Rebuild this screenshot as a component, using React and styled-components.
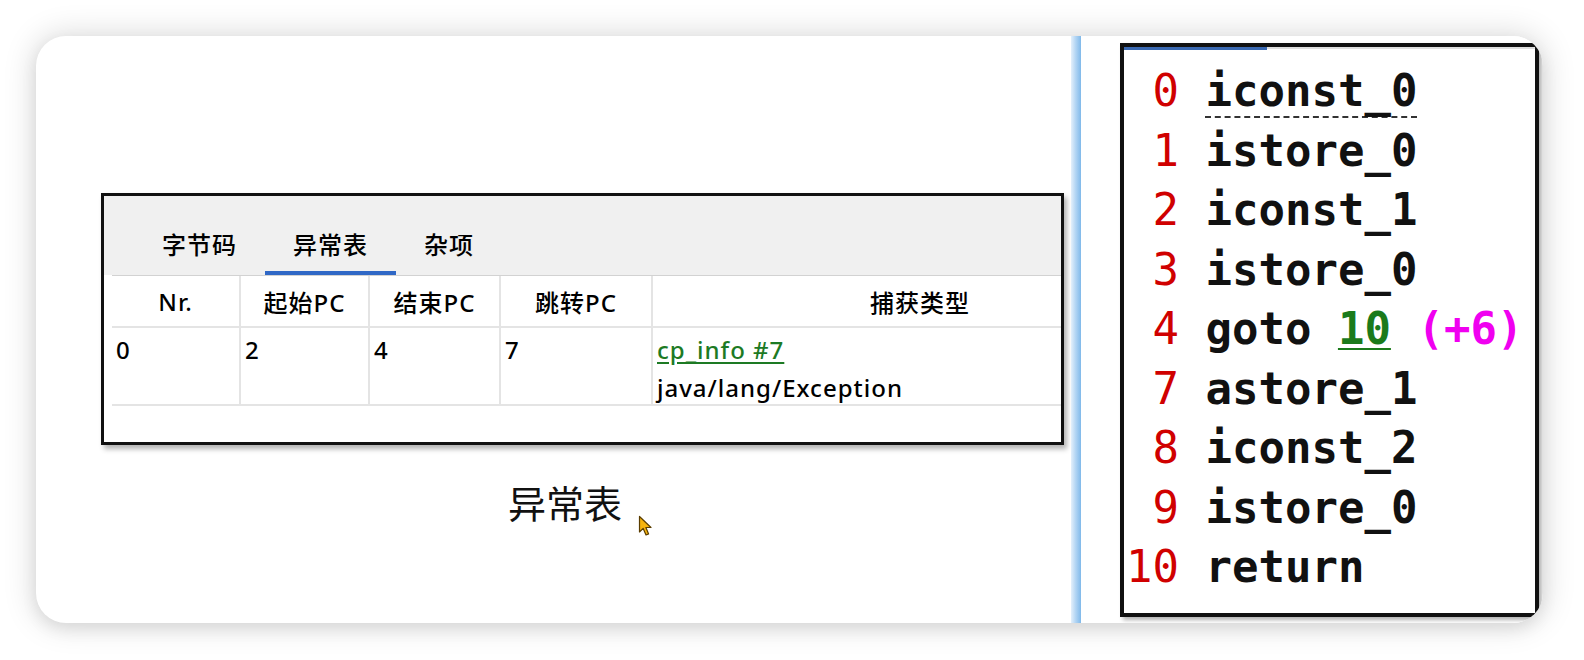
import React from 'react';
import styled, { createGlobalStyle } from 'styled-components';

const tabs = ['字节码', '异常表', '杂项'];
const columns = ['Nr.', '起始PC', '结束PC', '跳转PC', '捕获类型'];

const code = [
  { pc: '0', op: 'iconst_0', marked: true },
  { pc: '1', op: 'istore_0' },
  { pc: '2', op: 'iconst_1' },
  { pc: '3', op: 'istore_0' },
  { pc: '4', op: 'goto ', target: '10', offset: ' (+6)' },
  { pc: '7', op: 'astore_1' },
  { pc: '8', op: 'iconst_2' },
  { pc: '9', op: 'istore_0' },
  { pc: '10', op: 'return' },
];

const App = () => {
  return (
    <Page>
      <GlobalStyle />
      <Card>
        <LeftPane>
          <TablePanel>
            <TabBar>
              {tabs.map((t, i) => (
                <Tab key={t} active={i === 1}>{t}</Tab>
              ))}
            </TabBar>
            <TableBody>
              <Grid>
                {columns.map((c) => (
                  <HeadCell key={c}>{c}</HeadCell>
                ))}
                <Cell>0</Cell>
                <Cell>2</Cell>
                <Cell>4</Cell>
                <Cell>7</Cell>
                <Cell>
                  <Link>cp_info #7</Link>
                  <div>java/lang/Exception</div>
                </Cell>
              </Grid>
            </TableBody>
          </TablePanel>
          <CaptionRow>
            <Caption>异常表</Caption>
            <Cursor viewBox="0 0 15 22">
              <path
                d="M1.5 1.5 L1.5 17 L5.2 13.4 L8 20 L10.6 18.9 L7.9 12.5 L13 12.5 Z"
                fill="#f6b40e"
                stroke="#5a3d00"
                strokeWidth="1.2"
                strokeLinejoin="round"
              />
            </Cursor>
          </CaptionRow>
        </LeftPane>
        <Divider />
        <RightPane>
          <CodeBox>
            <TopRule>
              <RuleActive />
              <RuleRest />
            </TopRule>
            <CodeList>
              {code.map((line) => (
                <CodeLine key={line.pc}>
                  <Pc>{line.pc}</Pc>{' '}
                  <Op marked={line.marked}>{line.op}</Op>
                  {line.target && <Target>{line.target}</Target>}
                  {line.offset && <Offset>{line.offset}</Offset>}
                </CodeLine>
              ))}
            </CodeList>
          </CodeBox>
        </RightPane>
      </Card>
    </Page>
  );
};

const GlobalStyle = createGlobalStyle`
  html, body {
    margin: 0;
    padding: 0;
    background: #ffffff;
  }
  body {
    width: 1584px;
    height: 660px;
    overflow: hidden;
    font-family: "Noto Sans", "Noto Sans CJK SC", sans-serif;
    color: #111;
  }
`;

const Page = styled.div`
  box-sizing: border-box;
  height: 660px;
  padding: 36px 0 0 36px;
`;

const Card = styled.div`
  width: 1507px;
  height: 587px;
  display: flex;
  background: #fff;
  border-radius: 30px;
  overflow: hidden;
  box-shadow: 0 0 30px 4px rgba(0, 0, 0, 0.13), 0 6px 16px rgba(0, 0, 0, 0.08);
`;

const LeftPane = styled.div`
  flex: none;
  width: 1035px;
  box-sizing: border-box;
  padding: 157px 0 0 65px;
  display: flex;
  flex-direction: column;
`;

const TablePanel = styled.div`
  width: 963px;
  height: 252px;
  box-sizing: border-box;
  border: 3px solid #111;
  background: #fff;
  box-shadow: 3px 4px 5px rgba(0, 0, 0, 0.3);
  overflow: hidden;
  display: flex;
  flex-direction: column;
`;

const TabBar = styled.div`
  flex: none;
  height: 79px;
  display: flex;
  align-items: flex-end;
  padding-left: 30px;
  background: #f0f0f0;
`;

const Tab = styled.div`
  box-sizing: border-box;
  height: 60px;
  padding: 0 28px;
  display: flex;
  align-items: center;
  font-size: 24px;
  font-weight: 500;
  letter-spacing: 1px;
  color: #000;
  border-bottom: 4px solid ${(p) => (p.active ? '#3068c6' : 'transparent')};
`;

const TableBody = styled.div`
  flex: 1;
  padding-left: 8px;
  background: #fff;
`;

const Grid = styled.div`
  display: grid;
  grid-template-columns: 129px 129px 131px 152px 536px;
  grid-template-rows: 52px 78px;
  border-top: 1px solid #d2d2d2;
  font-size: 24px;
  font-weight: 500;
  letter-spacing: 1px;
  color: #000;
`;

const HeadCell = styled.div`
  display: flex;
  align-items: center;
  justify-content: center;
  border-right: 2px solid #e4e4e4;
  border-bottom: 2px solid #e4e4e4;
`;

const Cell = styled.div`
  box-sizing: border-box;
  padding: 3px 4px 0;
  line-height: 38px;
  overflow: hidden;
  white-space: nowrap;
  border-right: 2px solid #e4e4e4;
  border-bottom: 2px solid #e4e4e4;
`;

const Link = styled.div`
  color: #1d7a24;
  text-decoration: underline;
  text-underline-offset: 3px;
`;

const CaptionRow = styled.div`
  display: flex;
  align-items: flex-start;
  margin-top: 38px;
  padding-left: 407px;
`;

const Caption = styled.div`
  font-family: "Noto Sans CJK SC", sans-serif;
  font-size: 38px;
  line-height: 38px;
  color: #111;
`;

const Cursor = styled.svg`
  width: 15px;
  height: 22px;
  margin: 32px 0 0 16px;
`;

const Divider = styled.div`
  flex: none;
  width: 10px;
  background: linear-gradient(90deg, #e4f0fb 0%, #b4d6f4 45%, #80b9ea 100%);
`;

const RightPane = styled.div`
  flex: 1;
  box-sizing: border-box;
  padding: 7px 0 0 39px;
  background: #fff;
`;

const CodeBox = styled.div`
  width: 419px;
  height: 574px;
  box-sizing: border-box;
  border: 4px solid #111;
  background: #fff;
  box-shadow: 3px 3px 4px rgba(0, 0, 0, 0.3);
`;

const TopRule = styled.div`
  display: flex;
  align-items: flex-start;
  height: 3px;
`;

const RuleActive = styled.div`
  width: 143px;
  height: 3px;
  background: #3a69b2;
`;

const RuleRest = styled.div`
  flex: 1;
  height: 2px;
  background: #dedede;
`;

const CodeList = styled.div`
  padding: 11px 0 0 2px;
  font-family: "DejaVu Sans Mono", "Liberation Mono", monospace;
  font-size: 44px;
  line-height: 59.5px;
  font-weight: bold;
  color: #111;
  white-space: pre;
`;

const CodeLine = styled.div``;

const Pc = styled.span`
  display: inline-block;
  width: 2ch;
  text-align: right;
  font-weight: normal;
  color: #d00000;
`;

const Op = styled.span`
  border-bottom: ${(p) => (p.marked ? '2px dashed #333' : 'none')};
`;

const Target = styled.span`
  color: #1b7a1b;
  text-decoration: underline;
  text-decoration-thickness: 2px;
  text-underline-offset: 4px;
`;

const Offset = styled.span`
  color: #f000f0;
`;

export default App;
